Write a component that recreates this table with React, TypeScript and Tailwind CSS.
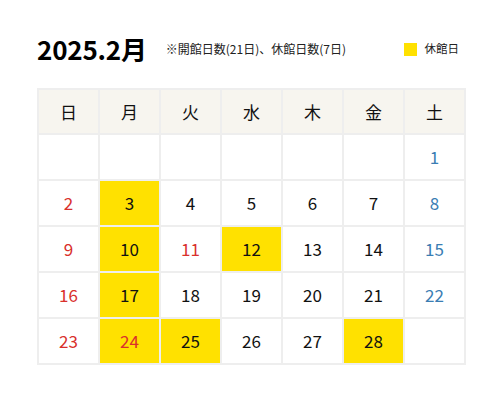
const weekdays = ["日", "月", "火", "水", "木", "金", "土"];

// null = empty cell, closed = 休館日
const days: ({ d: number; closed?: boolean } | null)[] = [
  null, null, null, null, null, null, { d: 1 },
  { d: 2 }, { d: 3, closed: true }, { d: 4 }, { d: 5 }, { d: 6 }, { d: 7 }, { d: 8 },
  { d: 9 }, { d: 10, closed: true }, { d: 11 }, { d: 12, closed: true }, { d: 13 }, { d: 14 }, { d: 15 },
  { d: 16 }, { d: 17, closed: true }, { d: 18 }, { d: 19 }, { d: 20 }, { d: 21 }, { d: 22 },
  { d: 23 }, { d: 24, closed: true }, { d: 25, closed: true }, { d: 26 }, { d: 27 }, { d: 28, closed: true }, null,
];

// holidays shown in red
const holidays = [11, 24];

export default function App() {
  return (
    <div
      className="w-[504px] h-[393px] bg-white px-[37px] pt-[32px]"
      style={{ fontFamily: '"Noto Sans CJK JP", "Noto Sans", sans-serif' }}
    >
      <div className="flex items-center h-[34px]">
        <h1 className="text-[26px] font-bold text-black tracking-[-0.2px] leading-none">2025.2月</h1>
        <p className="ml-[19px] text-[12px] text-[#222]">※開館日数(21日)、休館日数(7日)</p>
        <div className="ml-auto mr-[8px] flex items-center gap-[8px]">
          <span className="w-[13px] h-[13px] bg-[#ffe100]" />
          <span className="text-[11.5px] text-[#222]">休館日</span>
        </div>
      </div>

      <div className="mt-[22px] grid grid-cols-7 gap-[2px] bg-[#eeeeee] border-2 border-[#eeeeee] w-[429px]">
        {weekdays.map((w) => (
          <div key={w} className="h-[43px] bg-[#f7f5ef] flex items-center justify-center text-[17px] text-[#111]">
            {w}
          </div>
        ))}
        {days.map((cell, i) => {
          const col = i % 7;
          let color = "text-[#111]";
          if (cell && (col === 0 || holidays.includes(cell.d))) color = "text-[#d9302c]";
          else if (cell && col === 6) color = "text-[#3a7db3]";
          return (
            <div
              key={i}
              className={`h-[44px] flex items-center justify-center text-[17px] ${color} ${
                cell?.closed ? "bg-[#ffe100]" : "bg-white"
              }`}
            >
              {cell?.d}
            </div>
          );
        })}
      </div>
    </div>
  );
}
